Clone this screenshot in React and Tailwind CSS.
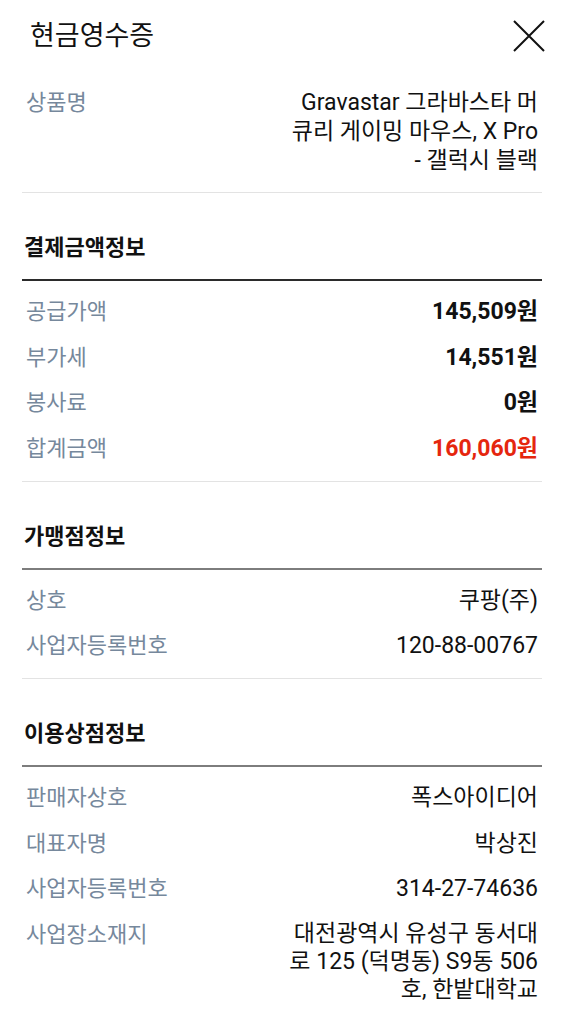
import React from 'react';

const font = { fontFamily: "Roboto, 'Noto Sans CJK KR', sans-serif" };

const Row = ({ label, children, className = '' }) => (
  <div className={`flex justify-between items-start px-[4px] ${className}`}>
    <span className="text-[22px] leading-[29px] text-[#76889c] shrink-0">{label}</span>
    <div className="text-right text-[23px] leading-[29px]">{children}</div>
  </div>
);

const Section = ({ title, line = 'bg-[#7d7d7d]', children }) => (
  <div>
    <h2 className="pt-[40px] text-[22px] leading-[29px] font-bold text-[#111] px-[2px]">{title}</h2>
    <div className={`mt-[17px] h-[2px] ${line}`} />
    {children}
  </div>
);

export default function App() {
  return (
    <div style={font} className="w-[566px] min-h-[1024px] bg-white text-[#111]">
      {/* header */}
      <div className="flex items-center justify-between pl-[30px] pr-[21px] pt-[19px] pb-[19px]">
        <h1 className="text-[27px] leading-[34px] font-normal">현금영수증</h1>
        <svg width="32" height="32" viewBox="0 0 32 32" aria-label="닫기">
          <path d="M1 1 L31 31 M31 1 L1 31" stroke="#111" strokeWidth="2" fill="none" />
        </svg>
      </div>

      <div className="pl-[22px] pr-[24px]">
        <Row label="상품명" className="pt-[16px] pb-[17px]">
          <p>
            Gravastar 그라바스타 머<br />
            큐리 게이밍 마우스, X Pro<br />
            - 갤럭시 블랙
          </p>
        </Row>
        <div className="h-px bg-[#e3e3e3]" />

        <Section title="결제금액정보" line="bg-[#2b2b2b]">
          <div className="pt-[16px] pb-[18px] flex flex-col gap-[16.5px]">
            <Row label="공급가액">
              <span className="font-bold">145,509원</span>
            </Row>
            <Row label="부가세">
              <span className="font-bold">14,551원</span>
            </Row>
            <Row label="봉사료">
              <span className="font-bold">0원</span>
            </Row>
            <Row label="합계금액">
              <span className="font-bold text-[#e5260e]">160,060원</span>
            </Row>
          </div>
          <div className="h-px bg-[#e3e3e3]" />
        </Section>

        <Section title="가맹점정보">
          <div className="pt-[16px] pb-[18px] flex flex-col gap-[16.5px]">
            <Row label="상호">
              <span>쿠팡(주)</span>
            </Row>
            <Row label="사업자등록번호">
              <span>120-88-00767</span>
            </Row>
          </div>
          <div className="h-px bg-[#e3e3e3]" />
        </Section>

        <Section title="이용상점정보">
          <div className="pt-[16px] pb-[18px] flex flex-col gap-[16.5px]">
            <Row label="판매자상호">
              <span>폭스아이디어</span>
            </Row>
            <Row label="대표자명">
              <span>박상진</span>
            </Row>
            <Row label="사업자등록번호">
              <span>314-27-74636</span>
            </Row>
            <Row label="사업장소재지">
              <p className="leading-[28px]">
                대전광역시 유성구 동서대<br />
                로 125 (덕명동) S9동 506<br />
                호, 한밭대학교
              </p>
            </Row>
          </div>
        </Section>
      </div>
    </div>
  );
}
